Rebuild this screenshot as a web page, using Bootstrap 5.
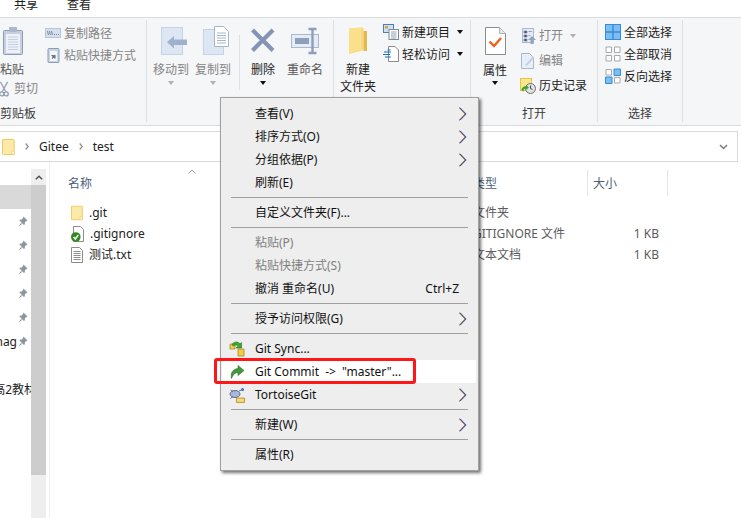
<!DOCTYPE html>
<html lang="zh">
<head>
<meta charset="utf-8">
<title>test</title>
<link rel="stylesheet" href="https://cdn.jsdelivr.net/npm/bootstrap@5.3.0/dist/css/bootstrap.min.css">
<style>
html,body{height:518px;overflow:hidden}
body{width:741px;background:#fff;color:#1c1c1c;font:12px/17px "Noto Sans","Noto Sans CJK SC",sans-serif;position:relative}
svg{display:block;flex:none}
.tabs-bar{height:18px;border-bottom:1px solid #dadbdc;padding-left:14px;gap:29px;overflow:hidden}
.tabs-bar span{margin-top:-4px}
.rb{height:108px;background:#f5f6f7;border-bottom:1px solid #dadbdc;padding-top:2px}
.grp{height:102px;border-right:1px solid #dfe0e2}
.grp-body{padding-top:6px;height:85px}
.grp-lab{height:17px;color:#3b3b3b;text-align:center}
.g1{width:147px}.g2{width:187px}.g3{width:137px}.g4{width:127px}.g5{width:85px}
.big{display:flex;flex-direction:column;align-items:center;text-align:center;white-space:nowrap}
.big svg.ic{height:30px;margin-bottom:4.5px}
.off{color:#858585}
.dk{color:#555}
.w24{width:24px}.w36{width:36px}
.car{width:0;height:0;border:3px solid transparent;border-top:4px solid #111;border-bottom:0;margin-top:3px}
.car.dim{border-top-color:#b0b0b0}
.sm{height:22px;display:flex;align-items:center;gap:3px;white-space:nowrap}
.sm svg{width:16px;height:16px}
.sm .car{margin:0 0 0 4px}
.sm.tall{height:25px}
.p1{padding-left:12px}.p2{padding-left:6px}
.p3{padding-left:7px}
.col-paste{width:45px}
.cut{margin-top:1px;height:20px;gap:5px;margin-left:-1px}
.cut svg{width:10px}
.vsep{width:1px;height:55px;background:#dfe0e2;margin:9px 11px 0 8px}
.gap6{gap:6px}.gap12{gap:12px}
.up5{margin-top:-5px}
.up4{margin-top:-4px}
.c2{margin-left:7px}.c3{margin-left:13px;margin-top:-3px}
.g4 .big span{margin-top:1px}
.g4 .big .car{margin-top:2px}
.gap-band{height:5px}
.addr{height:31px;width:738px;border:solid #d9d9d9;border-width:1px 1px 1px 0;padding-left:2px;color:#222}
.addr .sepc{margin:0 10px 0 10px}
.addr .f0{margin-right:10px}
.addr .dn{margin-left:auto;margin-right:9px}
.main{height:356px}
.nav-side{width:31px;padding-top:23px;overflow:hidden}
.nav-row{height:24px;display:flex;align-items:center;justify-content:flex-end;white-space:nowrap;padding-right:1px;gap:1px}
.nav-row.sel{background:#d9d9d9}
.nav-row svg{margin-right:2px}
.nav-clip{margin-right:-6px}
.sb{width:15px;margin-top:7px;background:#eee;display:flex;flex-direction:column}
.sb-up{height:16px}
.sb-th{height:290px;background:#cdcdcd}
.divv{width:4px;border-right:1px solid #efefef}
.pane{flex:1;padding-top:8px;overflow:hidden}
.hd{height:26px;color:#4c607a}
.hc1{width:423px;padding-left:18px;position:relative}
.hc1 svg{align-self:flex-start;margin:-1px 0 0 96px}
.hc2{width:114px}
.hc3{width:81px;border:solid #e5e5e5;border-width:0 1px;padding-left:5px}
.frows{margin-top:6px}
.fr{height:21px;color:#222}
.fn{width:423px;padding-left:21px;gap:6px}
.ft{width:114px;color:#5c5c5c;white-space:nowrap}
.fs{width:72px;text-align:right;color:#5c5c5c;padding-right:0}
.ctx{display:block;left:220px;top:97px;width:259px;height:374px;padding:4px 0;margin:0;background:#eee;border:1px solid #a0a0a0;border-radius:0;box-shadow:2px 2px 3px rgba(0,0,0,.55);font-size:12px}
.ctx .dropdown-item{height:23px;width:254px;margin-left:1px;padding:0 9px 0 33px;display:flex;align-items:center;color:#111;position:relative;white-space:nowrap;background:transparent}
.ctx .dropdown-item.disabled{color:#7f7f7f}
.ctx .dropdown-item.hot{background:#fff}
.ctx .dropdown-item .mi{position:absolute;left:6px;top:3px;width:18px;height:18px}
.ctx .ms-auto.key{padding-right:8px}
.ctx hr.dropdown-divider{margin:3px 10px 3px 10px;border:0;border-top:1px solid #a0a0a0;opacity:1;height:0;width:237px}
.arrow-txt{margin:0 3px}
.redbox{left:214px;top:358px;width:202px;height:26px;border:3px solid #ff1616;border-radius:3px;z-index:1001}
</style>
</head>
<body>
<svg width="0" height="0" class="position-absolute">
<symbol id="chev" viewBox="0 0 8 14"><path d="M.5 .7 6.600 7 .5 13.300" fill="none" stroke="#e0812f" stroke-width="1" transform="translate(-.4 0)"/><path d="M.5 .7 6.600 7 .5 13.300" fill="none" stroke="#3d8ae8" stroke-width="1" transform="translate(.6 0)"/><path d="M.5 .7 6.600 7 .5 13.300" fill="none" stroke="#3a2f55" stroke-width=".8"/></symbol>
<symbol id="pin" viewBox="0 0 10 11"><path d="M5.500 .5 9.500 4.500 8.300 5 6.800 6.600 6.800 8.600 5.600 8.800 1.500 4.500 2 3.600 3.900 3.500 5 2Z" fill="#8e959c"/><path d="M3 7 .3 10.500 4 8Z" fill="#8e959c"/></symbol>
<symbol id="fold" viewBox="0 0 13 16"><path d="M.5 .5h10.700a1 1 0 0 1 1 1v14H1.500a1 1 0 0 1-1-1z" fill="#fde9a8" stroke="#ecc960"/><path d="M10 12h2.200v3.500H10z" fill="#fff" stroke="#ecc960" stroke-width=".7"/></symbol>
</svg>

<div class="tabs-bar d-flex"><span>共享</span><span>查看</span></div>

<div class="rb d-flex">
  <div class="grp g1 d-flex flex-column">
    <div class="grp-body d-flex">
      <div class="col-paste">
        <div class="big w24">
          <svg class="ic" viewBox="0 0 24 30" width="24"><rect x="3.500" y="4.500" width="19" height="24" rx="1" fill="#c6d0e0" stroke="#8c9cb6"/><rect x="6" y="8" width="14" height="19" fill="#eef2f8"/><path d="M8 11h10M8 13.500h10M8 16h10M8 18.500h10M8 21h10M8 23.500h10" stroke="#c3cede"/><rect x="9" y="1" width="8" height="5" rx="1" fill="#aab7cc"/></svg>
          <span class="dk">粘贴</span>
        </div>
        <div class="sm cut"><svg viewBox="0 0 10 18" height="16"><path d="M1 1 7 12M9 1 3 12" stroke="#8b9bb0" stroke-width="1.300"/><circle cx="2.500" cy="14.500" r="2.300" fill="none" stroke="#8b9bb0" stroke-width="1.300"/><circle cx="7.500" cy="14.500" r="2.300" fill="none" stroke="#8b9bb0" stroke-width="1.300"/></svg><span class="off">剪切</span></div>
      </div>
      <div class="up4">
        <div class="sm"><svg viewBox="0 0 16 16"><rect x=".5" y="3.500" width="15" height="9" fill="#d6dfec" stroke="#b8c5d8"/><path d="M2.500 6 3.500 10M4.500 6 5.500 10M6.500 6 7.500 10M9 9.500h1M11 9.500h1M13 9.500h1" stroke="#6d7f9a" stroke-width=".9"/></svg><span class="off">复制路径</span></div>
        <div class="sm"><svg viewBox="0 0 16 16"><rect x="3" y="1.500" width="11" height="14" rx="1" fill="#c9d4e4" stroke="#8c9cb6"/><rect x="5" y="4" width="7" height="10" fill="#f3f5f9"/><path d="M7 12V8.500h3M7 8.500l3 3" stroke="#6b7990" stroke-width="1.200" transform="rotate(90 8.500 10)"/></svg><span class="off">粘贴快捷方式</span></div>
      </div>
    </div>
    <div class="grp-lab text-start">剪贴板</div>
  </div>

  <div class="grp g2 d-flex flex-column">
    <div class="grp-body d-flex p2">
      <div class="d-flex gap6">
        <div class="big w36">
          <svg class="ic" viewBox="0 0 36 30" width="36"><rect x="8.500" y="1.500" width="21" height="27" fill="#dde6f3" stroke="#c6d3e6"/><path d="M14 16 21 10v3.500h13v5.500H21v3.500z" fill="#9fb1cd"/></svg>
          <span class="off">移动到</span><i class="car dim"></i>
        </div>
        <div class="big w36">
          <svg class="ic" viewBox="0 0 36 30" width="36"><rect x="8.500" y="3.500" width="20" height="25" fill="#dde6f3" stroke="#c6d3e6"/><path d="M19.500 .5h9l5 5v15h-14z" fill="#fff" stroke="#a8b6cb"/><path d="M22 7h9M22 9.500h9M22 12h9M22 14.500h9M22 17h9" stroke="#a8b6cb"/></svg>
          <span class="off">复制到</span><i class="car dim"></i>
        </div>
      </div>
      <div class="vsep"></div>
      <div class="d-flex gap12">
        <div class="big w24">
          <svg class="ic" viewBox="0 0 26 30" width="26"><path d="M2.500 4 23 24.500M23 4 2.500 24.500" stroke="#8494b4" stroke-width="4.200"/></svg>
          <span>删除</span><i class="car"></i>
        </div>
        <div class="big w36">
          <svg class="ic" viewBox="0 0 36 30" width="36"><rect x="4.500" y="8.500" width="27" height="13" fill="#e6ecf5" stroke="#a9b8cf"/><rect x="8" y="12" width="14" height="6" fill="#8e9fbb"/><path d="M21.500 3h8M21.500 27h8M25.500 3v24" stroke="#8e9fbb" stroke-width="2.400"/></svg>
          <span class="dk">重命名</span>
        </div>
      </div>
    </div>
    <div class="grp-lab">组织</div>
  </div>

  <div class="grp g3 d-flex flex-column">
    <div class="grp-body d-flex p2">
      <div class="big w36">
        <svg class="ic" viewBox="0 0 36 30" width="36"><path d="M9 2.500 22 1.500c1 0 1.500 .5 1.500 1.500V24l-14 4z" fill="#f8d877"/><path d="M23.500 5h3.500v20h-3.500z" fill="#e3b94f"/><path d="M9 2.500 21 1.500V23L9 28z" fill="#fbe08c"/></svg>
        <span>新建</span><span>文件夹</span>
      </div>
      <div class="c2 up5">
        <div class="sm"><svg viewBox="0 0 16 16"><rect x=".5" y=".5" width="10" height="8" fill="#cfe0f2" stroke="#4d7fb3"/><rect x="2" y="2" width="3" height="2.500" fill="#e0a040"/><rect x="6" y="5.500" width="9.500" height="10" fill="#fff" stroke="#7c8a9a"/><path d="M8 8h5.500M8 10h5.500M8 12h5.500M8 14h5.500" stroke="#8aa0b8"/></svg><span>新建项目</span><i class="car"></i></div>
        <div class="sm"><svg viewBox="0 0 16 16"><path d="M5.500 .5h6.500l3.500 3.500v11.500h-10z" fill="#fff" stroke="#8a8a8a"/><path d="M1 6h7M0 8.500h7M2 11h6M4.500 4h3" stroke="#1f6fc0" stroke-width="1.200"/></svg><span>轻松访问</span><i class="car"></i></div>
      </div>
    </div>
    <div class="grp-lab">新建</div>
  </div>

  <div class="grp g4 d-flex flex-column">
    <div class="grp-body d-flex p1">
      <div class="big w24">
        <svg class="ic" viewBox="0 0 24 30" width="24"><path d="M2.500 1.500h14l6 6v21h-20z" fill="#fff" stroke="#8c8c8c"/><path d="M16.500 1.500v6h6" fill="#e8e8e8" stroke="#b0b0b0"/><path d="M6.500 15.500 11 20l7-8" fill="none" stroke="#f0601e" stroke-width="2.400"/></svg>
        <span>属性</span><i class="car"></i>
      </div>
      <div class="c3">
        <div class="sm tall"><svg viewBox="0 0 16 16"><rect x="2.500" y=".5" width="11" height="14" fill="#e6ecf5" stroke="#a9b8cf"/><path d="M4 3h3v2H4zM4 7h3v2H4zM4 11h3v2H4zM8.500 3.500h3.500M8.500 7.500h2" stroke="#92a4c0"/><path d="M12 8 16 12h-2.500v4h-3v-4H8z" fill="#92a4c0"/></svg><span class="off">打开</span><i class="car dim"></i></div>
        <div class="sm tall"><svg viewBox="0 0 16 16"><path d="M1.500 .5h8l4 4v11h-12z" fill="#e9eff7" stroke="#a9b8cf"/><path d="M5 12 12.500 3.500l1.500 1.500L7 13z" fill="#c5d2e4"/></svg><span class="off">编辑</span></div>
        <div class="sm tall"><svg viewBox="0 0 16 16"><rect x=".5" y=".5" width="11" height="12" fill="#fbe58f" stroke="#e8c540"/><circle cx="10.500" cy="10.500" r="5" fill="#dfe3e6" stroke="#6e6e6e"/><path d="M10.500 7.500v3l2 1" stroke="#444" fill="none"/><path d="M1.500 12a4 4 0 0 1 5-3.500L6 7l3 2.500L6 12l.3-1.500A2.500 2.500 0 0 0 3.500 14z" fill="#3da32c"/></svg><span>历史记录</span></div>
      </div>
    </div>
    <div class="grp-lab">打开</div>
  </div>

  <div class="grp g5 d-flex flex-column">
    <div class="grp-body p3">
      <div class="up5">
      <div class="sm"><svg viewBox="0 0 16 16"><rect x=".5" y=".5" width="15" height="15" fill="#7fbdf0" stroke="#2f8fdc"/><path d="M8 0v16M0 8h16" stroke="#2f8fdc" stroke-width="1.400"/></svg><span>全部选择</span></div>
      <div class="sm"><svg viewBox="0 0 16 16"><path d="M1 1h5.500v5.500H1zM9.500 1H15v5.500H9.500zM1 9.500h5.500V15H1zM9.500 9.500H15V15H9.500z" fill="#fff" stroke="#a8a8a8"/></svg><span>全部取消</span></div>
      <div class="sm"><svg viewBox="0 0 16 16"><path d="M1 1.500h5.500V7H1zM9.500 9.500H15V15H9.500z" fill="#fff" stroke="#a8a8a8"/><path d="M9 1h6.500v6.500H9zM.500 9h6.500v6.500H.500z" fill="#7fbdf0" stroke="#2f8fdc"/></svg><span>反向选择</span></div>
      </div>
    </div>
    <div class="grp-lab">选择</div>
  </div>
</div>

<div class="gap-band"></div>

<div class="addr d-flex align-items-center">
  <svg class="f0" width="13" height="16" viewBox="0 0 13 16"><use href="#fold"/></svg>
  <svg width="4" height="7" viewBox="0 0 4 7"><path d="M.7 .5 3.300 3.500 .7 6.500" fill="none" stroke="#8a8a8a" stroke-width="1.200"/></svg>
  <span class="sepc">Gitee</span>
  <svg width="4" height="7" viewBox="0 0 4 7"><path d="M.7 .5 3.300 3.500 .7 6.500" fill="none" stroke="#8a8a8a" stroke-width="1.200"/></svg>
  <span class="sepc">test</span>
  <svg class="dn" width="9" height="6" viewBox="0 0 9 6"><path d="M1 1 4.500 4.500 8 1" fill="none" stroke="#7a7a7a" stroke-width="1.500"/></svg>
</div>

<div class="main d-flex">
  <div class="nav-side">
    <div class="nav-row sel"></div>
    <div class="nav-row"><svg width="10" height="11"><use href="#pin"/></svg></div>
    <div class="nav-row"><svg width="10" height="11"><use href="#pin"/></svg></div>
    <div class="nav-row"><svg width="10" height="11"><use href="#pin"/></svg></div>
    <div class="nav-row"><svg width="10" height="11"><use href="#pin"/></svg></div>
    <div class="nav-row"><svg width="10" height="11"><use href="#pin"/></svg></div>
    <div class="nav-row"><span>nag</span><svg width="10" height="11"><use href="#pin"/></svg></div>
    <div class="nav-row"></div>
    <div class="nav-row"><span class="nav-clip">高2教材</span></div>
  </div>
  <div class="sb">
    <div class="sb-up d-flex align-items-center justify-content-center"><svg width="8" height="5" viewBox="0 0 8 5"><path d="M.8 4.300 4 1.200 7.200 4.300" fill="none" stroke="#505050" stroke-width="1.500"/></svg></div>
    <div class="sb-th"></div>
  </div>
  <div class="divv"></div>
  <div class="pane">
    <div class="hd d-flex">
      <div class="hc1 d-flex align-items-center"><span>名称</span><svg width="8" height="5" viewBox="0 0 8 5"><path d="M.5 4.500 4 1 7.500 4.500" fill="none" stroke="#9a9a9a"/></svg></div>
      <div class="hc2 d-flex align-items-center">类型</div>
      <div class="hc3 d-flex align-items-center">大小</div>
    </div>
    <div class="frows">
      <div class="fr d-flex align-items-center">
        <div class="fn d-flex align-items-center"><svg width="12" height="16" viewBox="0 0 13 16"><use href="#fold"/></svg><span>.git</span></div>
        <div class="ft">文件夹</div><div class="fs"></div>
      </div>
      <div class="fr d-flex align-items-center">
        <div class="fn d-flex align-items-center"><svg width="13" height="16" viewBox="0 0 13 16"><path d="M2.500 .5h7l3 3v12h-10z" fill="#fff" stroke="#8c8c8c"/><circle cx="4.800" cy="11" r="4.800" fill="#2f8a1e"/><path d="M2.500 11 4.300 13 7.300 9" fill="none" stroke="#fff" stroke-width="1.500"/></svg><span>.gitignore</span></div>
        <div class="ft">GITIGNORE 文件</div><div class="fs">1 KB</div>
      </div>
      <div class="fr d-flex align-items-center">
        <div class="fn d-flex align-items-center"><svg width="12" height="16" viewBox="0 0 12 16"><path d="M.5 .5h8l3 3v12H.5z" fill="#fff" stroke="#8c8c8c"/><path d="M2.500 4.500h7M2.500 6.500h7M2.500 8.500h7M2.500 10.500h7M2.500 12.500h7" stroke="#8c8c8c"/></svg><span>测试.txt</span></div>
        <div class="ft">文本文档</div><div class="fs">1 KB</div>
      </div>
    </div>
  </div>
</div>

<div class="dropdown-menu ctx position-absolute">
  <div class="dropdown-item">查看(V)<svg class="ms-auto" width="8" height="14"><use href="#chev"/></svg></div>
  <div class="dropdown-item">排序方式(O)<svg class="ms-auto" width="8" height="14"><use href="#chev"/></svg></div>
  <div class="dropdown-item">分组依据(P)<svg class="ms-auto" width="8" height="14"><use href="#chev"/></svg></div>
  <div class="dropdown-item">刷新(E)</div>
  <hr class="dropdown-divider">
  <div class="dropdown-item">自定义文件夹(F)...</div>
  <hr class="dropdown-divider">
  <div class="dropdown-item disabled">粘贴(P)</div>
  <div class="dropdown-item disabled">粘贴快捷方式(S)</div>
  <div class="dropdown-item">撤消 重命名(U)<span class="ms-auto key">Ctrl+Z</span></div>
  <hr class="dropdown-divider">
  <div class="dropdown-item">授予访问权限(G)<svg class="ms-auto" width="8" height="14"><use href="#chev"/></svg></div>
  <hr class="dropdown-divider">
  <div class="dropdown-item">
    <svg class="mi" viewBox="0 0 18 18"><path d="M2 4h5v5H2zM10 9h6v7h-6z" fill="#f1c94c" stroke="#a98a22" stroke-width=".8"/><path d="M4 5C5 1.500 10 1 12 4l1.500-1.500V8H8l2-1.800C9 4.500 7 4.500 6 6z" fill="#3fa62e" stroke="#23701a" stroke-width=".6"/></svg>
    <span>Git Sync...</span>
  </div>
  <div class="dropdown-item hot">
    <svg class="mi" viewBox="0 0 18 18"><path d="M3.500 15.500C2 9.500 5.500 6 10 5.500V2.500L16 7.500 10 12.500V9.500C7 9.500 5 11.500 3.500 15.500Z" fill="#3f9a3a" stroke="#2a6d30" stroke-width=".6"/></svg>
    <span>Git Commit <span class="arrow-txt">-&gt;</span> "master"...</span>
  </div>
  <div class="dropdown-item">
    <svg class="mi" viewBox="0 0 18 18"><ellipse cx="7" cy="8" rx="5" ry="3.500" fill="#a9b8d6" stroke="#5a6c94"/><circle cx="14.500" cy="3.500" r="1.500" fill="#3b6fb0"/><path d="M2.500 4 5 6M2.500 12.500 5 10.500M11 5 13.500 4" stroke="#5a6c94"/><path d="M8.500 12h8v4.500h-8z" fill="#f5d878" stroke="#a98a22" stroke-width=".8"/></svg>
    <span>TortoiseGit</span><svg class="ms-auto" width="8" height="14"><use href="#chev"/></svg>
  </div>
  <hr class="dropdown-divider">
  <div class="dropdown-item">新建(W)<svg class="ms-auto" width="8" height="14"><use href="#chev"/></svg></div>
  <hr class="dropdown-divider">
  <div class="dropdown-item">属性(R)</div>
</div>
<div class="redbox position-absolute"></div>
</body>
</html>
